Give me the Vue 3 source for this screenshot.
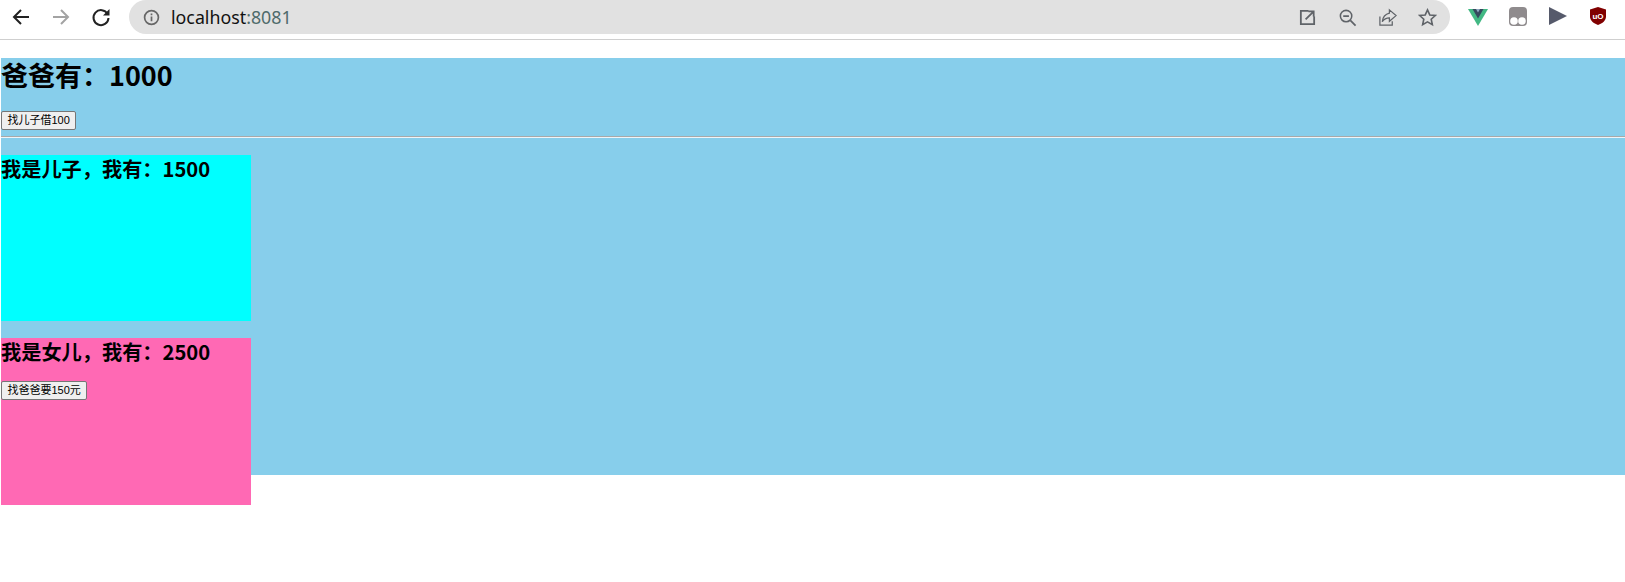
<template>
  <div class="browser">
    <header class="toolbar">
      <div class="nav">
        <svg class="nav-icon" viewBox="0 0 24 24"><path d="M20 12H5M12 5l-7 7 7 7" fill="none" stroke="#222" stroke-width="2" /></svg>
        <svg class="nav-icon" viewBox="0 0 24 24"><path d="M4 12h15M12 5l7 7-7 7" fill="none" stroke="#a3a3a3" stroke-width="2" /></svg>
        <svg class="nav-icon" viewBox="0 0 24 24"><path d="M18.6 9A7.5 7.5 0 1 0 19.500 13" fill="none" stroke="#222" stroke-width="2" /><path d="M20.500 4v6.500H14z" fill="#222" /></svg>
      </div>
      <div class="omnibox">
        <svg class="info" viewBox="0 0 16 16"><circle cx="8" cy="8" r="6.500" fill="none" stroke="#666" stroke-width="1.600" /><path d="M8 7v4.500M8 4.300v1.500" stroke="#666" stroke-width="1.600" /></svg>
        <span class="url"><span class="host">localhost</span>:8081</span>
        <div class="omni-actions">
          <svg class="act" viewBox="0 0 20 20"><path d="M11 3H3v14h14V9M8 12l8-8M11 3.500h5.500V9" fill="none" stroke="#5f6368" stroke-width="1.900" /></svg>
          <svg class="act" viewBox="0 0 20 20"><circle cx="8.500" cy="8.500" r="6" fill="none" stroke="#5f6368" stroke-width="1.600" /><path d="M5.500 8.500h6M13 13l5.500 5.500" stroke="#5f6368" stroke-width="1.800" fill="none" /></svg>
          <svg class="act" viewBox="0 0 20 20"><path d="M2 9v9h13v-4" fill="none" stroke="#5f6368" stroke-width="1.300" /><path d="M12 2l7 6-7 6v-3.500c-3 0-5.500 1-7.500 4 .5-4.500 3-8 7.500-9z" fill="none" stroke="#5f6368" stroke-width="1.300" /></svg>
          <svg class="act" viewBox="0 0 20 20"><path d="M10 2l2.400 5.300 5.800.6-4.300 3.900 1.200 5.700L10 14.600l-5.100 2.900 1.200-5.700L1.800 7.900l5.800-.6z" fill="none" stroke="#5f6368" stroke-width="1.700" /></svg>
        </div>
      </div>
      <div class="extensions">
        <svg class="ext" viewBox="0 0 20 20"><path d="M0 2h20L10 19z" fill="#42b883" /><path d="M4.500 2h11L10 11.500z" fill="#35495e" /><path d="M8 2h4l-2 3.500z" fill="#8fa8c0" /></svg>
        <svg class="ext" viewBox="0 0 20 20"><rect x="1" y="0" width="18" height="19" rx="4" fill="#8f8b8d" /><circle cx="6" cy="14" r="3.800" fill="#fff" /><circle cx="14" cy="14" r="3.800" fill="#fff" /></svg>
        <svg class="ext" viewBox="0 0 20 20"><path d="M1 0l18 9-18 9z" fill="#565a6b" /></svg>
        <svg class="ext" viewBox="0 0 20 20"><path d="M10 0l8 2.500v7c0 4-3.500 7-8 8.500-4.500-1.500-8-4.500-8-8.500v-7z" fill="#800000" /><text x="10" y="11.500" class="ub">uO</text></svg>
      </div>
    </header>

    <main class="father">
      <h1>爸爸有：{{ money }}</h1>
      <button type="button">找儿子借100</button>
      <hr />
      <section class="child son">
        <h2>我是儿子，我有：1500</h2>
      </section>
      <section class="child daughter">
        <h2>我是女儿，我有：2500</h2>
        <button type="button">找爸爸要150元</button>
      </section>
    </main>
  </div>
</template>

<script setup>
import { ref } from 'vue'

const money = ref(1000)
</script>

<style scoped>
.browser {
  font-family: "Noto Sans CJK SC", "Noto Sans", sans-serif;
  color: #000;
}

.toolbar {
  display: flex;
  align-items: flex-start;
  height: 39px;
  border-bottom: 1px solid #cfcfcf;
  box-sizing: content-box;
}
.nav {
  display: flex;
  gap: 16px;
  padding: 5px 0 0 9px;
  width: 129px;
  box-sizing: border-box;
}
.nav-icon {
  width: 24px;
  height: 24px;
}
.omnibox {
  display: flex;
  align-items: center;
  width: 1321px;
  height: 34px;
  border-radius: 17px;
  background: #e1e1e1;
  padding: 0 13px 0 14px;
  box-sizing: border-box;
}
.info {
  width: 17px;
  height: 17px;
}
.url {
  margin-left: 11px;
  font-family: "Noto Sans", sans-serif;
  font-size: 17.800px;
  color: #4f6b6b;
}
.host {
  color: #111;
}
.omni-actions {
  display: flex;
  gap: 21px;
  margin-left: auto;
}
.act {
  width: 19px;
  height: 19px;
}
.extensions {
  display: flex;
  gap: 20px;
  padding: 7px 0 0 18px;
}
.ext {
  width: 20px;
  height: 20px;
}
.ub {
  font-family: "Liberation Sans", sans-serif;
  font-size: 8px;
  font-weight: 700;
  fill: #fff;
  text-anchor: middle;
}

/* the blue stops at 417px while the daughter box runs past it */
.father {
  margin: 18px 0 0 1px;
  background: linear-gradient(skyblue, skyblue) no-repeat;
  background-size: 100% 417px;
}
h1 {
  margin: 0 0 19px;
  font-size: 27px;
  line-height: 34px;
  font-weight: 700;
}
h2 {
  margin: 0 0 16px;
  font-size: 20.200px;
  line-height: 27px;
  font-weight: 700;
}
button {
  display: block;
  height: 19px;
  padding: 0 5.500px;
  font-family: "Liberation Sans", "Noto Sans CJK SC", sans-serif;
  font-size: 11px;
  line-height: 15px;
  color: #000;
  background: #efefef;
  border: 1px solid #767676;
  border-radius: 2px;
}
hr {
  height: 0;
  margin: 6px 0 17px;
  border: 0;
  border-top: 1px solid #a9a9a9;
  border-bottom: 1px solid #eef5f9;
}
.child {
  width: 250px;
  height: 166px;
}
.son {
  background: aqua;
}
.daughter {
  height: 167px;
  margin-top: 17px;
  background: hotpink;
}
</style>
